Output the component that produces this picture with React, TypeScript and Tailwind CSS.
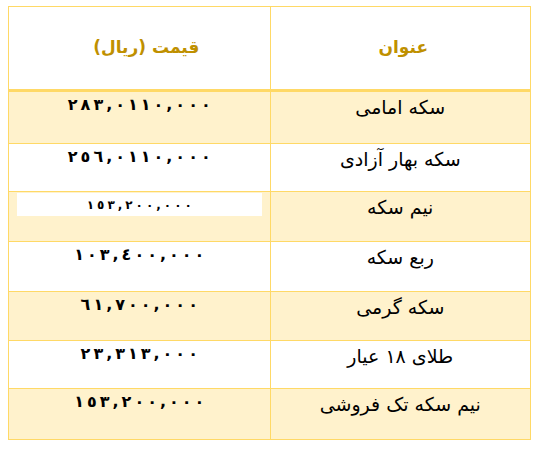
import React from "react";

const rows = [
  { name: "سکه امامی", price: "٢٨٣,٠١١٠,٠٠٠", h: "h-[52px]", bg: "bg-[#fff2cc]", boxed: false },
  { name: "سکه بهار آزادی", price: "٢٥٦,٠١١٠,٠٠٠", h: "h-[48px]", bg: "bg-white", boxed: false },
  { name: "نیم سکه", price: "١٥٣,٢٠٠,٠٠٠", h: "h-[50px]", bg: "bg-[#fff2cc]", boxed: true },
  { name: "ربع سکه", price: "١٠٣,٤٠٠,٠٠٠", h: "h-[50px]", bg: "bg-white", boxed: false },
  { name: "سکه گرمی", price: "٦١,٧٠٠,٠٠٠", h: "h-[49px]", bg: "bg-[#fff2cc]", boxed: false },
  { name: "طلای ۱۸ عیار", price: "٢٣,٣١٣,٠٠٠", h: "h-[48px]", bg: "bg-white", boxed: false },
  { name: "نیم سکه تک فروشی", price: "١٥٣,٢٠٠,٠٠٠", h: "h-[50px]", bg: "bg-[#fff2cc]", boxed: false },
];

function Spaced({ text, className }: { text: string; className: string }) {
  return (
    <span dir="ltr" className={className}>
      {Array.from(text).map((c, i) => (
        <span key={i}>{c}</span>
      ))}
    </span>
  );
}

export default function App() {
  return (
    <div className="w-[546px] h-[453px] bg-white pt-[6px] pl-[8px]" style={{ fontFamily: '"DejaVu Sans", sans-serif' }}>
      <div dir="rtl" className="w-[523px] border border-[#ffd966]">
        <div className="grid grid-cols-2 h-[85px] border-b-[3px] border-[#ffd966]">
          <div className="border-l border-[#ffd966] flex items-center justify-center pl-[6px] text-[17px] font-bold text-[#bf9000]">
            عنوان
          </div>
          <div className="flex items-center justify-center pl-[14px] text-[17px] font-bold text-[#bf9000]">
            قیمت (ریال)
          </div>
        </div>
        {rows.map((r, i) => (
          <div
            key={i}
            className={`grid grid-cols-2 ${r.h} ${r.bg} ${i < rows.length - 1 ? "border-b border-[#ffd966]" : ""}`}
          >
            <div className="border-l border-[#ffd966] flex justify-center pt-[1px] text-[19px] leading-[28px] text-black">
              {r.name}
            </div>
            <div className="flex justify-center">
              {r.boxed ? (
                <div className="mt-[1px] mx-[8px] w-full h-[23px] bg-white flex items-center justify-center">
                  <Spaced text={r.price} className="flex gap-[3px] text-[12px] leading-[16px] font-bold text-black" />
                </div>
              ) : (
                <Spaced text={r.price} className="flex gap-[3px] h-[22px] mt-[2px] text-[16px] leading-[22px] font-bold text-black" />
              )}
            </div>
          </div>
        ))}
      </div>
    </div>
  );
}
